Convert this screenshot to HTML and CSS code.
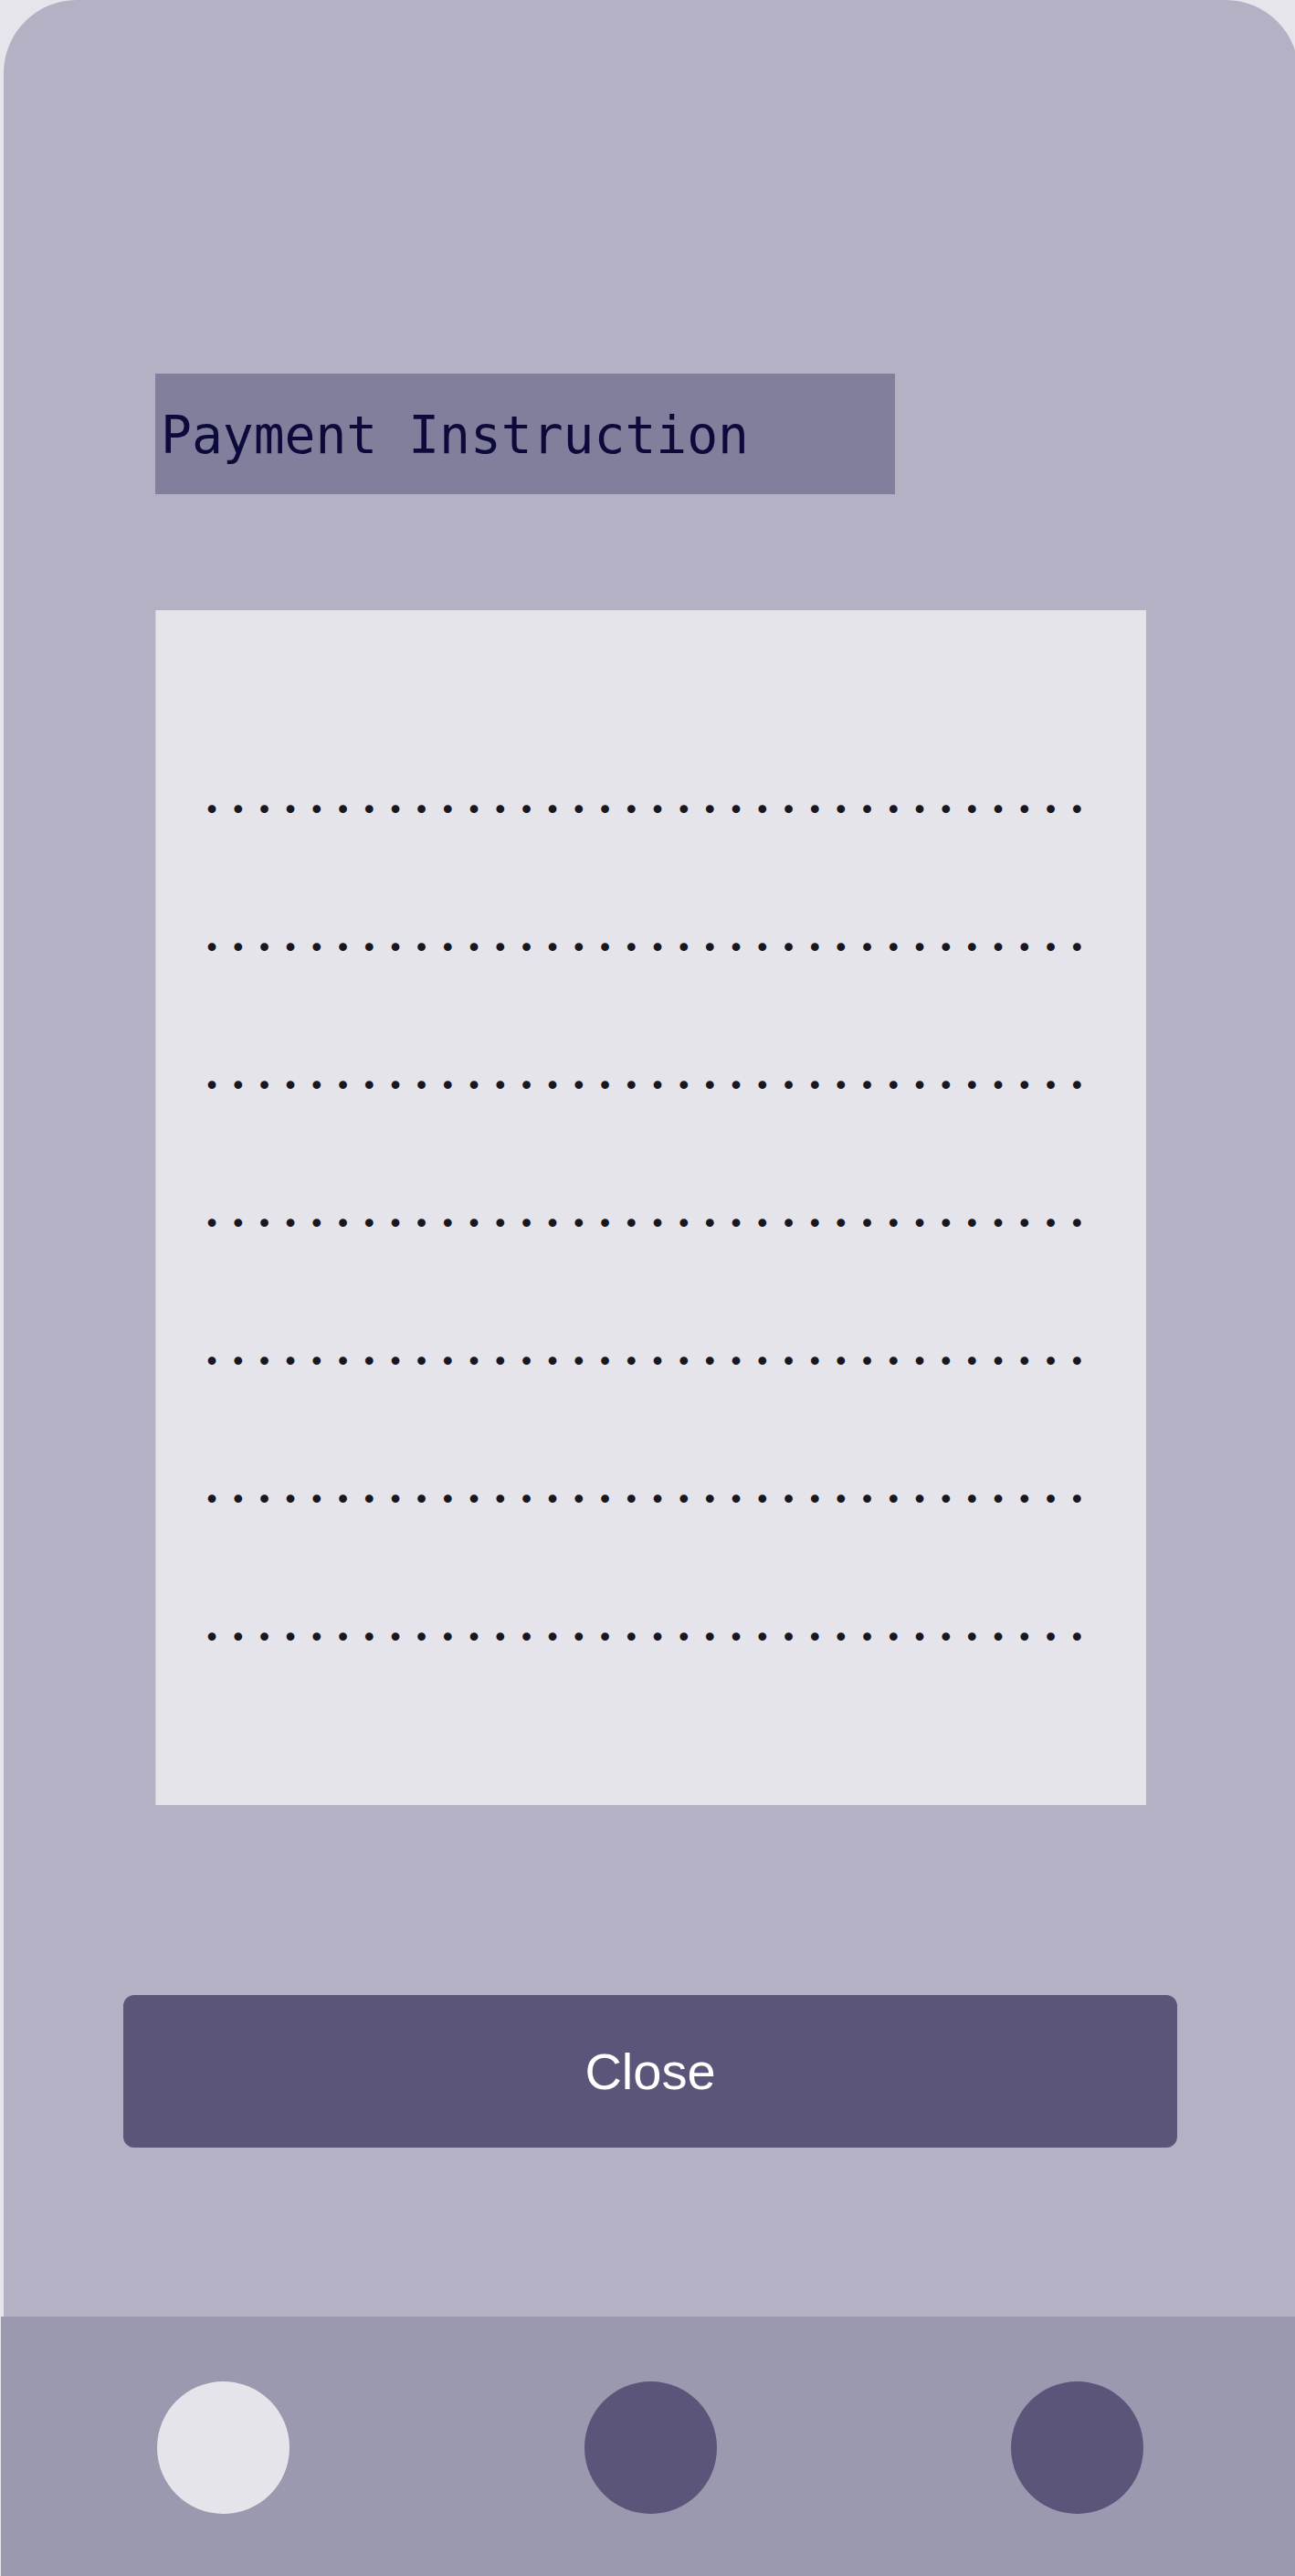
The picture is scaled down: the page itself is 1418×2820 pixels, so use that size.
FILE: index.html
```html
<!DOCTYPE html>
<html lang="en">
<head>
<meta charset="utf-8">
<title>Payment Instruction</title>
<link rel="stylesheet" href="styles.css">
</head>
<body>
<div class="screen">
  <main class="frame">
    <h1 class="title-bar">Payment Instruction</h1>
    <section class="card">
      <div class="dots">••••••••••••••••••••••••••••••••••</div>
      <div class="dots">••••••••••••••••••••••••••••••••••</div>
      <div class="dots">••••••••••••••••••••••••••••••••••</div>
      <div class="dots">••••••••••••••••••••••••••••••••••</div>
      <div class="dots">••••••••••••••••••••••••••••••••••</div>
      <div class="dots">••••••••••••••••••••••••••••••••••</div>
      <div class="dots">••••••••••••••••••••••••••••••••••</div>
    </section>
    <button class="close-btn" type="button">Close</button>
  </main>
  <nav class="tabbar">
    <span class="tab tab-active"></span>
    <span class="tab"></span>
    <span class="tab"></span>
  </nav>
</div>
</body>
</html>
```

FILE: styles.css
```css
html, body {
  margin: 0;
  padding: 0;
  overflow: hidden;
}
body {
  background: #e6e5ec;
  width: 1418px;
  height: 2820px;
}
.screen {
  display: flex;
  flex-direction: column;
  width: 1418px;
  height: 2820px;
}
.frame {
  box-sizing: border-box;
  margin-left: 4px;
  width: 1418px;
  height: 2536px;
  flex: none;
  background: #b3b1c3;
  border-radius: 80px 80px 0 0;
  padding: 409px 0 0 131px;
  display: flex;
  flex-direction: column;
  align-items: flex-start;
}
.title-bar {
  box-sizing: border-box;
  margin: 0 0 0 35px;
  width: 810px;
  height: 132px;
  padding: 4px 0 0 6px;
  background: #817f9b;
  color: #0c0a3a;
  font-family: "DejaVu Sans Mono", monospace;
  font-weight: normal;
  font-size: 56.3px;
  line-height: 128px;
  white-space: nowrap;
}
.card {
  box-sizing: border-box;
  margin: 127px 0 0 35px;
  width: 1085px;
  height: 1308px;
  background: #e5e4eb;
  border-left: 1px solid #d3d1dc;
  padding: 143px 0 0 52px;
  display: flex;
  flex-direction: column;
}
.dots {
  height: 151px;
  line-height: 151px;
  font-family: "DejaVu Sans Mono", monospace;
  font-size: 30px;
  letter-spacing: 10.64px;
  color: #18171f;
  white-space: nowrap;
}
.close-btn {
  margin-top: 208px;
  width: 1154px;
  height: 167px;
  border: none;
  border-radius: 12px;
  background: #5a5579;
  color: #ffffff;
  font-family: "Liberation Sans", Arial, sans-serif;
  font-size: 56px;
  padding: 0;
  line-height: 1;
  cursor: pointer;
}
.tabbar {
  box-sizing: border-box;
  margin-left: 1px;
  flex: 1;
  background: #9b99af;
  display: flex;
  justify-content: space-between;
  align-items: flex-start;
  padding: 71px 166px 0 171px;
}
.tab {
  width: 145px;
  height: 145px;
  border-radius: 50%;
  background: #5a5579;
}
.tab-active {
  background: #e5e4eb;
}
```
